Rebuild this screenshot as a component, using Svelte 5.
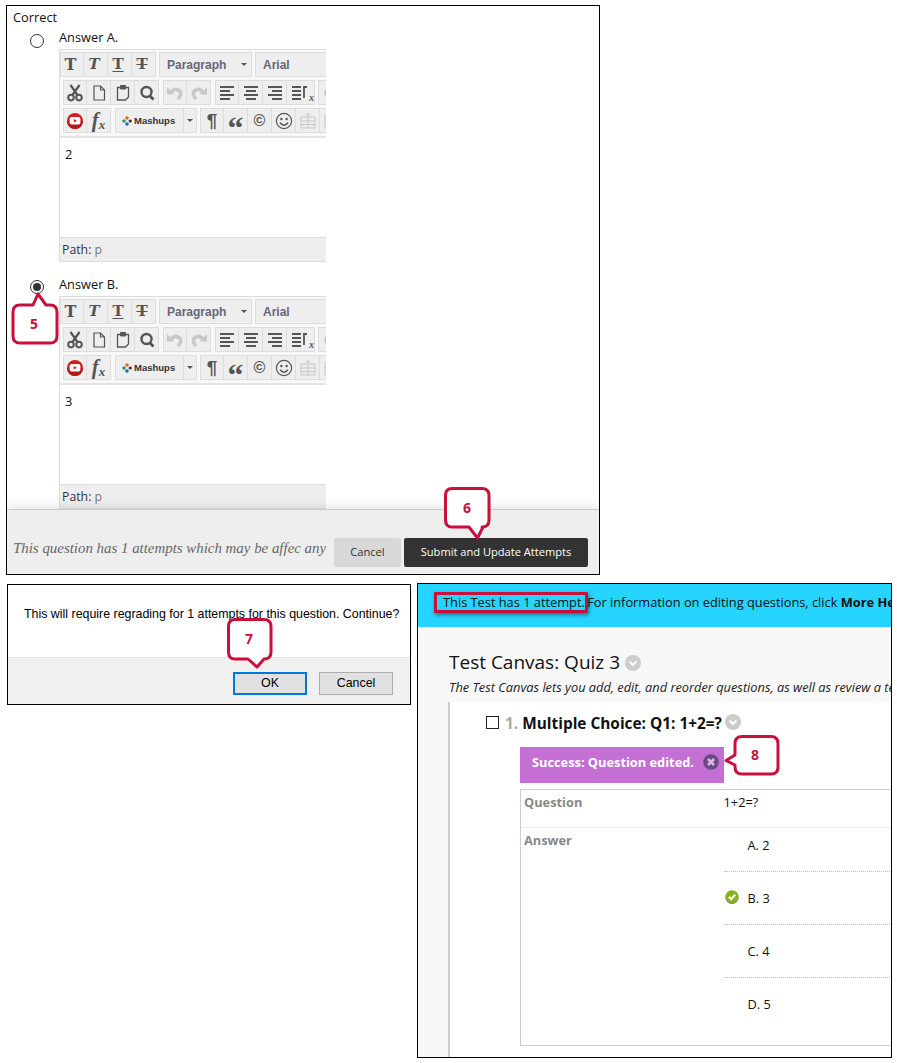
<script>
  const callouts = [
    { n: '5', x: 34, y: 329, d: 'M20 305H33L38 294L46 305H50Q57 305 57 312V336Q57 343 50 343H20Q13 343 13 336V312Q13 305 20 305Z' },
    { n: '6', x: 467, y: 513, d: 'M452 488.5H482Q489 488.5 489 495.5V520Q489 527 482 527H483L477.5 538L469 527H452Q445.5 527 445.5 520V495.5Q445.5 488.5 452 488.5Z' },
    { n: '7', x: 249, y: 644, d: 'M235 619.5H264Q271 619.5 271 626.5V652Q271 659 264 659L257 667L248 659H235Q228.5 659 228.5 652V626.5Q228.5 619.5 235 619.5Z' },
    { n: '8', x: 755, y: 760, d: 'M742 736.5H771Q778 736.5 778 743.5V767Q778 774 771 774H742Q735 774 735 767V765L726 760.5L735 755V743.5Q735 736.5 742 736.5Z' }
  ];
  const answers = [
    { t: 'A. 2', ok: false },
    { t: 'B. 3', ok: true },
    { t: 'C. 4', ok: false },
    { t: 'D. 5', ok: false }
  ];
</script>

{#snippet lines(kind)}
  <svg class="ic big" viewBox="0 0 18 18" aria-hidden="true">
    {#if kind === 'left'}
      <path d="M2 3H16M2 7H12M2 11H16M2 15H12" />
    {:else if kind === 'center'}
      <path d="M2 3H16M4 7H14M2 11H16M4 15H14" />
    {:else}
      <path d="M2 3H16M6 7H16M2 11H16M6 15H16" />
    {/if}
  </svg>
{/snippet}

{#snippet editor(value)}
  <div class="editor">
    <div class="toolbar">
      <div class="tbrow first">
        <div class="grp">
          <span class="btn t tb">T</span>
          <span class="btn t ti">T</span>
          <span class="btn t tu">T</span>
          <span class="btn t ts">T</span>
        </div>
        <div class="select para"><span>Paragraph</span><i class="caret"></i></div>
        <div class="select font"><span>Arial</span></div>
      </div>
      <div class="tbrow">
        <div class="grp">
          <span class="btn">
            <svg class="ic big" viewBox="0 0 18 18" aria-hidden="true">
              <path d="M4.5 1L11.5 11M13.5 1L6.5 11" stroke-width="2.2" />
              <circle cx="5" cy="13.6" r="2.8" stroke-width="2" />
              <circle cx="13" cy="13.6" r="2.8" stroke-width="2" />
            </svg>
          </span>
          <span class="btn">
            <svg class="ic big" viewBox="0 0 18 18" aria-hidden="true">
              <path d="M4 2H10.5L14.5 6V16H4ZM10.5 2V6H14.5" stroke-width="1.2" />
            </svg>
          </span>
          <span class="btn">
            <svg class="ic big" viewBox="0 0 18 18" aria-hidden="true">
              <path d="M6 3.5H3.5V16H11.5L14.5 13V3.5H12" stroke-width="1.3" />
              <path class="solid" d="M6.5 1.5H11.5V5H6.5Z" stroke-width="1" />
            </svg>
          </span>
          <span class="btn">
            <svg class="ic big" viewBox="0 0 18 18" aria-hidden="true">
              <circle cx="8.5" cy="8" r="5" stroke-width="2.4" />
              <path d="M11.5 11.5L15.5 15.5" stroke-width="2.8" />
            </svg>
          </span>
        </div>
        <div class="grp g4">
          <span class="btn off">
            <svg class="ic big" viewBox="0 0 18 18" aria-hidden="true">
              <path d="M5 8Q9 3.5 13 6.5T12 15" stroke-width="3.6" />
              <path class="fillc" d="M1 3L8.5 10.5H1Z" />
            </svg>
          </span>
          <span class="btn off">
            <svg class="ic big" viewBox="0 0 18 18" aria-hidden="true">
              <path d="M13 8Q9 3.5 5 6.5T6 15" stroke-width="3.6" />
              <path class="fillc" d="M17 3L9.5 10.5H17Z" />
            </svg>
          </span>
        </div>
        <div class="grp g4">
          <span class="btn">{@render lines('left')}</span>
          <span class="btn">{@render lines('center')}</span>
          <span class="btn">{@render lines('right')}</span>
          <span class="btn wide">
            <svg class="ic big" viewBox="0 0 18 18" aria-hidden="true">
              <path d="M1 3H10M1 7H10M1 11H10M1 15H10M13 14V3H16" stroke-width="1.8" />
            </svg>
            <em class="sub">x</em>
          </span>
        </div>
        <div class="grp">
          <span class="btn off">
            <svg class="ic" viewBox="0 0 18 18" aria-hidden="true">
              <circle cx="9" cy="9" r="5" stroke-width="3" />
            </svg>
          </span>
        </div>
      </div>
      <div class="tbrow">
        <div class="grp">
          <span class="btn">
            <svg class="ic big" viewBox="0 0 18 18" aria-hidden="true">
              <circle class="yt" cx="9" cy="9" r="8" />
              <path class="ytd" d="M1 9A8 8 0 0 0 17 9Z" />
              <rect class="ytw" x="3.6" y="5" width="10.8" height="7.6" rx="2" />
              <path class="ytp" d="M7.8 7L11 8.8L7.8 10.6Z" />
            </svg>
          </span>
          <span class="btn fx"><b>f</b><em>x</em></span>
        </div>
        <div class="grp g4">
          <span class="btn mash">
            <svg class="dots" viewBox="0 0 10 10" aria-hidden="true">
              <circle cx="5" cy="2" r="1.8" fill="#e0701a" />
              <circle cx="2" cy="5" r="1.8" fill="#2a9a6a" />
              <circle cx="5" cy="8" r="1.8" fill="#1d6fb8" />
              <circle cx="8.2" cy="5" r="1.6" fill="#333" />
            </svg>
            Mashups
          </span>
          <span class="btn narrow"><i class="caret"></i></span>
        </div>
        <div class="grp">
          <span class="btn glyph pil">¶</span>
          <span class="btn glyph quo">“</span>
          <span class="btn glyph cop">©</span>
          <span class="btn">
            <svg class="ic big" viewBox="0 0 18 18" aria-hidden="true">
              <circle cx="9" cy="9" r="7.6" stroke-width="1.2" />
              <circle class="eye" cx="6.4" cy="7" r="1.2" />
              <circle class="eye" cx="11.6" cy="7" r="1.2" />
              <path d="M5 10.8Q9 15.5 13 10.8" stroke-width="1.5" />
            </svg>
          </span>
          <span class="btn off">
            <svg class="ic big" viewBox="0 0 18 18" aria-hidden="true">
              <path d="M2 5H16V16H2ZM2 9H16M2 12.5H16M9 5V16M9 1V4.5M7 2.8H11" stroke-width="1" />
            </svg>
          </span>
          <span class="btn off">
            <svg class="ic big" viewBox="0 0 18 18" aria-hidden="true">
              <path d="M2 3H16V16H2ZM2 8H16M2 12H16" stroke-width="1" />
            </svg>
          </span>
        </div>
      </div>
    </div>
    <div class="content">{value}</div>
    <div class="path">Path: <span>p</span></div>
  </div>
{/snippet}

<div class="page">
  <section class="panel top">
    <div class="label">Correct</div>
    <div class="answers">
      <div class="answer">
        <span class="radio"></span>
        <div class="col">
          <div class="aname">Answer A.</div>
          {@render editor('2')}
        </div>
      </div>
      <div class="answer second">
        <span class="radio on"></span>
        <div class="col">
          <div class="aname">Answer B.</div>
          {@render editor('3')}
        </div>
      </div>
    </div>
    <div class="footer">
      <div class="note">This question has 1 attempts which may be affec any</div>
      <button class="cancel">Cancel</button>
      <button class="submit">Submit and Update Attempts</button>
    </div>
  </section>

  <div class="lower">
    <section class="panel dialog">
      <div class="msg">This will require regrading for 1 attempts for this question. Continue?</div>
      <div class="dfoot">
        <button class="dbtn ok">OK</button>
        <button class="dbtn">Cancel</button>
      </div>
    </section>

    <section class="panel canvas">
      <div class="info">
        <span class="mark">This Test has 1 attempt.</span> For information on editing questions, click <b>More Help</b>
      </div>
      <div class="head">
        <h1>Test Canvas: Quiz 3 <span class="chev"><svg viewBox="0 0 16 16" aria-hidden="true"><path d="M4.5 6.5L8 10L11.5 6.5" /></svg></span></h1>
        <p>The Test Canvas lets you add, edit, and reorder questions, as well as review a test</p>
      </div>
      <div class="qcard">
        <div class="qtitle">
          <span class="check"></span>
          <span class="num">1.</span>
          <b>Multiple Choice: Q1: 1+2=?</b>
          <span class="chev small"><svg viewBox="0 0 16 16" aria-hidden="true"><path d="M4.5 6.5L8 10L11.5 6.5" /></svg></span>
        </div>
        <div class="success">
          <span>Success: Question edited.</span>
          <svg class="close" viewBox="0 0 16 16" aria-hidden="true">
            <circle cx="8" cy="8" r="7.8" />
            <path d="M5 5L11 11M11 5L5 11" />
          </svg>
        </div>
        <div class="qtable">
          <div class="qrow">
            <div class="th">Question</div>
            <div class="td">1+2=?</div>
          </div>
          <div class="qrow ans">
            <div class="th">Answer</div>
            <div class="alist">
              {#each answers as a}
                <div class="aitem">
                  {#if a.ok}
                    <svg class="tick" viewBox="0 0 14 14" aria-hidden="true">
                      <circle cx="7" cy="7.4" r="6.6" fill="#777" />
                      <circle cx="7" cy="6.6" r="6.4" fill="#8ab31a" />
                      <path d="M3.8 6.8L6.2 9.2L10.2 4.6" />
                    </svg>
                  {/if}
                  <span>{a.t}</span>
                </div>
              {/each}
            </div>
          </div>
        </div>
      </div>
    </section>
  </div>

  <div class="highlight"></div>

  <svg class="overlay" viewBox="0 0 897 1063" aria-hidden="false">
    {#each callouts as c}
      <path class="bubble" d={c.d} />
      <text x={c.x} y={c.y} class="cnum">{c.n}</text>
    {/each}
  </svg>
</div>

<style>
  :global(body) { margin: 0; background: #fff; }
  .page {
    position: relative;
    width: 897px;
    height: 1063px;
    padding: 5px 0 0 6px;
    box-sizing: border-box;
    font-family: "Open Sans", sans-serif;
    font-size: 12.8px;
    color: #111;
    overflow: hidden;
  }
  .panel { border: 1px solid #000; box-sizing: border-box; background: #fff; }
  .top {
    width: 594px;
    height: 570px;
    display: flex;
    flex-direction: column;
    overflow: hidden;
  }
  .label { padding: 2px 0 1px 6px; line-height: 18px; height: 18px; }
  .answers { padding-left: 23px; flex: 1; margin-top: 1px; }
  .answer { display: flex; }
  .second { margin-top: 13px; }
  .radio {
    width: 12px;
    height: 12px;
    border: 1px solid #333;
    border-radius: 50%;
    flex: none;
    margin-top: 6px;
    display: flex;
    align-items: center;
    justify-content: center;
    background: #fff;
  }
  .second .radio { margin-top: 5px; }
  .radio.on::after {
    content: "";
    width: 8px;
    height: 8px;
    border-radius: 50%;
    background: #333;
  }
  .col { margin-left: 15px; width: 267px; }
  .aname { height: 19px; line-height: 18px; margin-bottom: 2px; }
  .editor {
    width: 267px;
    height: 213px;
    display: flex;
    flex-direction: column;
    overflow: hidden;
    border-left: 1px solid #ddd;
    box-sizing: border-box;
    border-top: 1px solid #ddd;
  }
  .toolbar {
    height: 88px;
    flex: none;
    background: #f8f8f8;
    border-bottom: 2px solid #e4e4e4;
    box-sizing: border-box;
    padding: 2px 0 0 3px;
    display: flex;
    flex-direction: column;
    gap: 3px;
  }
  .tbrow { display: flex; gap: 3px; height: 25px; flex: none; }
  .tbrow.first { margin-left: -3px; }
  .g4 { margin-left: 1px; }
  .grp {
    display: flex;
    border: 1px solid #ddd;
    background: #eee;
    height: 25px;
    box-sizing: border-box;
    flex: none;
  }
  .btn {
    width: 24px;
    height: 23px;
    box-sizing: border-box;
    border-left: 1px solid #ddd;
    display: flex;
    align-items: center;
    justify-content: center;
    flex: none;
    position: relative;
    color: #555;
  }
  .grp .btn:first-child { border-left: 0; width: 22px; }
  .btn.wide { width: 28px; justify-content: flex-start; padding-left: 4px; }
  .btn.narrow { width: 13px; }
  .ic { width: 16px; height: 16px; fill: none; stroke: #555; stroke-width: 1.8; }
  .ic.big { width: 18px; height: 18px; }
  .solid { fill: #555; }
  .off .ic { stroke: #c8c8c8; }
  .off .fillc { fill: #c8c8c8; stroke: none; }
  .eye { fill: #555; stroke: none; }
  .yt { fill: #d01f1f; stroke: none; }
  .ytd { fill: #b81818; stroke: none; }
  .ytw { fill: #fff; stroke: none; }
  .ytp { fill: #d01f1f; stroke: none; }
  .t { font-family: "DejaVu Serif", serif; line-height: 1; color: #555; padding-right: 3px; }
  .tb { font-weight: 700; font-size: 16px; }
  .ti { font-style: italic; font-weight: 700; font-size: 15px; }
  .tu { font-weight: 700; font-size: 15px; text-decoration: underline; text-decoration-thickness: 1px; text-underline-offset: 2px; }
  .ts { font-size: 15px; font-weight: 700; text-decoration: line-through; text-decoration-thickness: 1px; }
  .select {
    border: 1px solid #ddd;
    background: #eee;
    height: 25px;
    box-sizing: border-box;
    display: flex;
    align-items: center;
    font-family: "Liberation Sans", sans-serif;
    font-weight: 700;
    font-size: 12px;
    color: #667;
    flex: none;
  }
  .para { width: 93px; padding-left: 7px; justify-content: space-between; padding-right: 2px; }
  .font { width: 90px; padding-left: 7px; }
  .caret {
    display: inline-block;
    width: 0;
    height: 0;
    border-left: 3px solid transparent;
    border-right: 3px solid transparent;
    border-top: 3px solid #555;
  }
  .para .caret { margin-right: 2px; }
  .sub { position: absolute; right: 0; bottom: 1px; font: italic 700 10px "Liberation Serif", serif; color: #555; }
  .fx { font-family: "Liberation Serif", serif; color: #555; }
  .fx b { font-style: italic; font-size: 21px; line-height: 1; }
  .fx em { font-size: 13px; font-weight: 700; margin-top: 8px; }
  .grp .btn.mash {
    width: 67px;
    font-family: "Liberation Sans", sans-serif;
    font-weight: 700;
    font-size: 9.5px;
    color: #333;
    gap: 2px;
    justify-content: flex-start;
    padding-left: 6px;
  }
  .dots { width: 10px; height: 10px; flex: none; }
  .glyph { color: #555; }
  .pil { font: 700 19px "Liberation Sans", sans-serif; }
  .quo { font: 700 32px "Liberation Serif", serif; padding-top: 15px; }
  .cop { font: 700 16px "Liberation Sans", sans-serif; }
  .content { flex: 1; padding: 8px 5px 0; line-height: 16px; }
  .path {
    height: 25px;
    flex: none;
    box-sizing: border-box;
    background: #eee;
    border-top: 1px solid #ddd;
    border-bottom: 1px solid #ddd;
    padding-left: 2px;
    line-height: 23px;
    font-size: 12.3px;
    color: #333;
  }
  .path span { color: #777; }
  .footer {
    height: 65px;
    flex: none;
    background: #eee;
    border-top: 1px solid #ccc;
    box-shadow: 0 -4px 8px rgba(0, 0, 0, 0.08);
    box-sizing: border-box;
    display: flex;
    align-items: flex-end;
    padding: 0 11px 7px 6px;
    position: relative;
  }
  .note {
    width: 313px;
    flex: none;
    white-space: nowrap;
    overflow: hidden;
    font: italic 14.9px "Liberation Serif", serif;
    color: #666;
    height: 20px;
    line-height: 20px;
    margin-bottom: 9px;
  }
  .footer button {
    height: 29px;
    border: 0;
    border-radius: 2px;
    font-family: "Open Sans", sans-serif;
    font-size: 11.1px;
    padding: 0 0 3px;
  }
  .cancel { width: 67px; margin-left: 8px; background: #d8d8d8; color: #333; }
  .submit { width: 184px; margin-left: 3px; background: #333; color: #fff; }
  .lower { display: flex; align-items: flex-start; margin-top: 8px; margin-left: 1px; }
  .dialog { width: 404px; height: 121px; display: flex; flex-direction: column; margin-top: 1px; }
  .msg {
    height: 72px;
    box-sizing: border-box;
    font: 12.4px "Liberation Sans", sans-serif;
    padding: 21px 0 0 16px;
    color: #000;
    line-height: 16px;
  }
  .dfoot {
    flex: 1;
    background: #f0f0f0;
    border-top: 1px solid #e5e5e5;
    display: flex;
    justify-content: flex-end;
    gap: 12px;
    padding: 14px 17px 0 0;
    box-sizing: border-box;
  }
  .dbtn {
    width: 74px;
    height: 23px;
    box-sizing: border-box;
    border: 1px solid #adadad;
    background: #e1e1e1;
    font: 12.4px "Liberation Sans", sans-serif;
    color: #000;
    padding: 0 0 2px;
  }
  .ok { border: 2px solid #0078d7; }
  .canvas {
    width: 475px;
    height: 475px;
    margin-left: 6px;
    background: #f8f8f8;
    overflow: hidden;
    white-space: nowrap;
  }
  .info {
    height: 43px;
    background: #26d5ff;
    box-sizing: border-box;
    padding-left: 25px;
    line-height: 37px;
    color: #111;
  }
  .mark { margin-right: -1px; }
  .head { height: 75px; padding-left: 31px; box-sizing: border-box; }
  h1 {
    margin: 0;
    padding-top: 23px;
    font-size: 19px;
    font-weight: 400;
    line-height: 25px;
    color: #111;
    display: flex;
    align-items: center;
    gap: 5px;
  }
  .head p { margin: 4px 0 0; font-style: italic; line-height: 16px; color: #222; }
  .chev { width: 16px; height: 16px; border-radius: 50%; background: #ccc; display: inline-flex; flex: none; }
  .chev svg { width: 16px; height: 16px; fill: none; stroke: #fff; stroke-width: 2; }
  .qcard {
    margin-left: 30px;
    height: 356px;
    background: #fff;
    border-left: 2px solid #ccc;
    box-sizing: border-box;
    padding: 11px 0 0 36px;
  }
  .qtitle { display: flex; align-items: center; height: 20px; font-size: 15.4px; }
  .check { width: 11px; height: 11px; border: 1px solid #222; margin-right: 6px; margin-top: -2px; flex: none; }
  .num { color: #aaa; font-weight: 700; margin-right: 4px; }
  .qtitle b { color: #111; }
  .qtitle .chev { margin-left: 3px; margin-top: -2px; }
  .success {
    margin: 14px 0 0 34px;
    width: 204px;
    height: 36px;
    box-sizing: border-box;
    background: #c36fd4;
    color: #fff;
    font-weight: 700;
    padding: 0 5px 6px 12px;
    display: flex;
    align-items: center;
    justify-content: space-between;
  }
  .close { width: 16px; height: 16px; flex: none; }
  .close circle { fill: #6a4a85; }
  .close path { stroke: #e0b8ea; stroke-width: 2.6; fill: none; }
  .qtable {
    margin: 6px 0 0 34px;
    width: 420px;
    height: 257px;
    box-sizing: border-box;
    border: 1px solid #ccc;
    border-right: 0;
  }
  .qrow { display: flex; height: 38px; box-sizing: border-box; border-bottom: 1px solid #eee; }
  .qrow.ans { height: auto; border: 0; }
  .th { flex: none; padding: 4px 0 0 3px; color: #888; font-weight: 700; line-height: 16px; width: 199.5px; }
  .td { padding-top: 4px; line-height: 16px; }
  .alist { flex: 1; }
  .aitem {
    height: 53px;
    box-sizing: border-box;
    border-bottom: 1px dotted #bbb;
    padding: 18px 0 0 24px;
    line-height: 16px;
    position: relative;
  }
  .aitem:first-child { height: 44px; padding-top: 9px; }
  .aitem:last-child { border: 0; }
  .tick { position: absolute; left: 1px; top: 18px; width: 14px; height: 14px; }
  .tick path { fill: none; stroke: #fff; stroke-width: 2.2; }
  .highlight {
    position: absolute;
    left: 434px;
    top: 592px;
    width: 154px;
    height: 21px;
    box-sizing: border-box;
    border: 3px solid #c90f3c;
    box-shadow: 1px 2px 4px rgba(0, 0, 0, 0.45);
  }
  .overlay { position: absolute; left: 0; top: 0; width: 897px; height: 1063px; pointer-events: none; }
  .bubble { fill: #fff; stroke: #c90f3c; stroke-width: 3; stroke-linejoin: round; }
  .cnum { fill: #c90f3c; font-family: "Open Sans", sans-serif; font-weight: 700; font-size: 14px; text-anchor: middle; }
</style>
